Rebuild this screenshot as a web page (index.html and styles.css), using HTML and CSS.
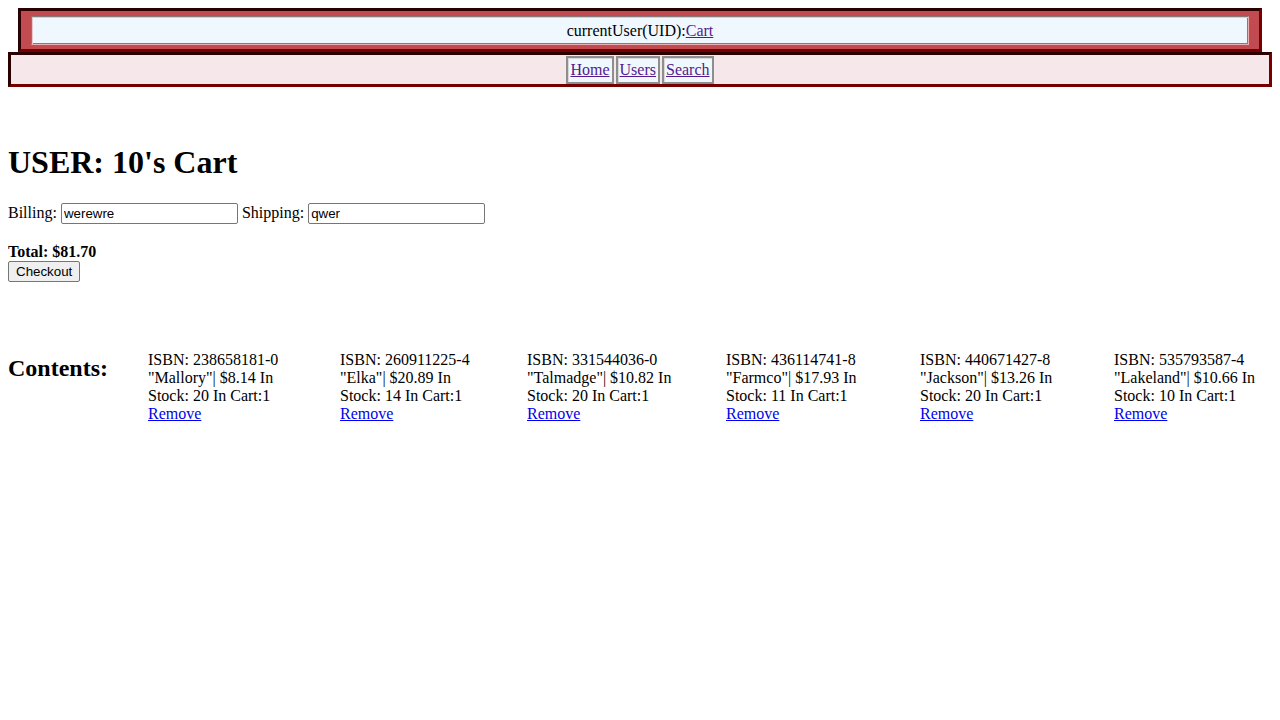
FILE: index.html
```html
<!DOCTYPE html>
<html lang="en">
<head>
<meta charset="utf-8">
<title>USER: 10's Cart</title>
<link rel="stylesheet" href="styles.css">
</head>
<body>
<header class="topbar">
  <div class="user-box">currentUser(UID):<a class="link-visited" href="#">Cart</a></div>
</header>
<nav class="nav">
  <a class="nav-link" href="#">Home</a>
  <a class="nav-link" href="#">Users</a>
  <a class="nav-link" href="#">Search</a>
</nav>
<main class="page">
  <h1 class="title">USER: 10's Cart</h1>
  <form class="address-form">
    <label class="field-label">Billing: <input class="field" type="text" value="werewre"></label>
    <label class="field-label">Shipping: <input class="field" type="text" value="qwer"></label>
  </form>
  <div class="checkout">
    <strong class="total">Total: $81.70</strong>
    <button class="checkout-btn" type="button">Checkout</button>
  </div>
  <section class="contents">
    <h2 class="contents-title">Contents:</h2>
    <div class="item">ISBN: 238658181-0 "Mallory"| $8.14 In Stock: 20 In Cart:1<br><a class="remove" href="#">Remove</a></div>
    <div class="item">ISBN: 260911225-4 "Elka"| $20.89 In Stock: 14 In Cart:1<br><a class="remove" href="#">Remove</a></div>
    <div class="item">ISBN: 331544036-0 "Talmadge"| $10.82 In Stock: 20 In Cart:1<br><a class="remove" href="#">Remove</a></div>
    <div class="item">ISBN: 436114741-8 "Farmco"| $17.93 In Stock: 11 In Cart:1<br><a class="remove" href="#">Remove</a></div>
    <div class="item">ISBN: 440671427-8 "Jackson"| $13.26 In Stock: 20 In Cart:1<br><a class="remove" href="#">Remove</a></div>
    <div class="item">ISBN: 535793587-4 "Lakeland"| $10.66 In Stock: 10 In Cart:1<br><a class="remove" href="#">Remove</a></div>
  </section>
</main>
</body>
</html>
```
FILE: styles.css
```css
html, body {
  background: #ffffff;
}
body {
  margin: 8px;
  font-family: "Liberation Serif", "Times New Roman", serif;
  font-size: 16px;
  color: #000000;
}

.topbar {
  margin: 0 10px;
  padding: 5px 10px 4px;
  background: #c14b50;
  border: 3px solid;
  border-color: #2b0000 #760000 #760000 #2b0000;
}
.user-box {
  background: #f0f8ff;
  text-align: center;
  padding: 5px 0 4px;
  line-height: 18px;
  border: 1px solid;
  border-color: #8a7878 #eab0b2 #eab0b2 #8a7878;
  box-shadow: inset 1px 1px 0 #e6c8cc, inset -1px -1px 0 #8a7878;
}
.link-visited {
  color: #551a8b;
}

.nav {
  display: flex;
  justify-content: center;
  gap: 2px;
  padding: 1px 0 0;
  background: #f5e7ea;
  border: 3px solid;
  border-color: #2b0000 #760000 #760000 #2b0000;
}
.nav-link {
  display: block;
  padding: 3px 2px;
  line-height: 18px;
  background: #f0f8ff;
  color: #551a8b;
  border: 2px solid #8e8e8e;
  box-shadow: inset 1px 1px 0 #d8d8d8;
}

.page {
  padding-top: 36px;
}
.title {
  margin: 21px 0 22px;
  font-size: 32px;
  font-weight: bold;
}
.address-form {
  margin: 0 0 19px;
  line-height: 18px;
}
.field {
  box-sizing: border-box;
  width: 177px;
  height: 21px;
  padding: 1px 2px;
  font-family: "Liberation Sans", Arial, sans-serif;
  font-size: 13.33px;
  color: #000000;
  border: 1px solid #767676;
  border-radius: 2px;
  background: #ffffff;
  vertical-align: baseline;
}
.checkout {
  display: flex;
  flex-direction: column;
  align-items: flex-start;
  line-height: 18px;
}
.total {
  font-weight: bold;
}
.checkout-btn {
  box-sizing: border-box;
  height: 21px;
  padding: 1px 7px;
  font-family: "Liberation Sans", Arial, sans-serif;
  font-size: 13.33px;
  color: #000000;
  background: #efefef;
  border: 1px solid #767676;
  border-radius: 2px;
}

.contents {
  display: grid;
  grid-template-columns: 140px 192px 187px 199px 194px 194px 1fr;
  align-items: start;
  margin-top: 69px;
  line-height: 18px;
}
.contents-title {
  margin: 3px 0 0;
  font-size: 24px;
  line-height: 28px;
  font-weight: bold;
}
.item {
  width: 150px;
}
.remove {
  color: #0000ee;
}
```
